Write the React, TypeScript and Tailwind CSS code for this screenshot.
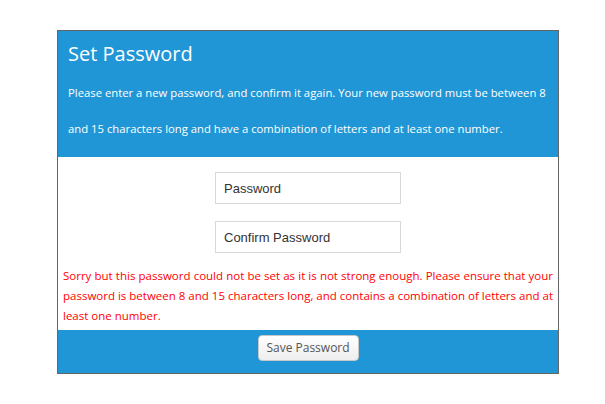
import React from "react";

export default function App() {
  return (
    <div className="w-[605px] h-[404px] bg-white pt-[30px] pl-[57px]" style={{ fontFamily: '"Open Sans", sans-serif' }}>
      <div className="w-[502px] border border-[#666666] bg-white">
        <div className="bg-[#2196d6] pl-[10px] pr-[4px] pt-[9px] pb-[10px] text-white">
          <h1 className="text-[20px] leading-[28px] font-normal">Set Password</h1>
          <p className="mt-[7px] text-[11.3px] leading-[36px] font-normal">
            Please enter a new password, and confirm it again. Your new password must be between 8 and 15 characters long and have a combination of letters and at least one number.
          </p>
        </div>
        <div className="flex flex-col items-center pt-[15px] gap-[17px]">
          <input
            type="text"
            placeholder="Password"
            className="w-[186px] h-[32px] border border-[#d8d8d8] px-[8px] text-[13px] text-[#333] placeholder:text-[#333] outline-none"
            style={{ fontFamily: '"Liberation Sans", Arial, sans-serif' }}
          />
          <input
            type="text"
            placeholder="Confirm Password"
            className="w-[186px] h-[32px] border border-[#d8d8d8] px-[8px] text-[13px] text-[#333] placeholder:text-[#333] outline-none"
            style={{ fontFamily: '"Liberation Sans", Arial, sans-serif' }}
          />
        </div>
        <p className="px-[5px] pt-[13px] pb-[4px] text-[11.5px] leading-[20px] text-[#ff0000] text-justify">
          Sorry but this password could not be set as it is not strong enough. Please ensure that your password is between 8 and 15 characters long, and contains a combination of letters and at least one number.
        </p>
        <div className="bg-[#2196d6] h-[43px] flex justify-center pt-[5px]">
          <button className="w-[101px] h-[26px] rounded-[4px] border border-[#c8c8c8] bg-gradient-to-b from-white to-[#eeeeee] text-[12px] text-[#555]">
            Save Password
          </button>
        </div>
      </div>
    </div>
  );
}
